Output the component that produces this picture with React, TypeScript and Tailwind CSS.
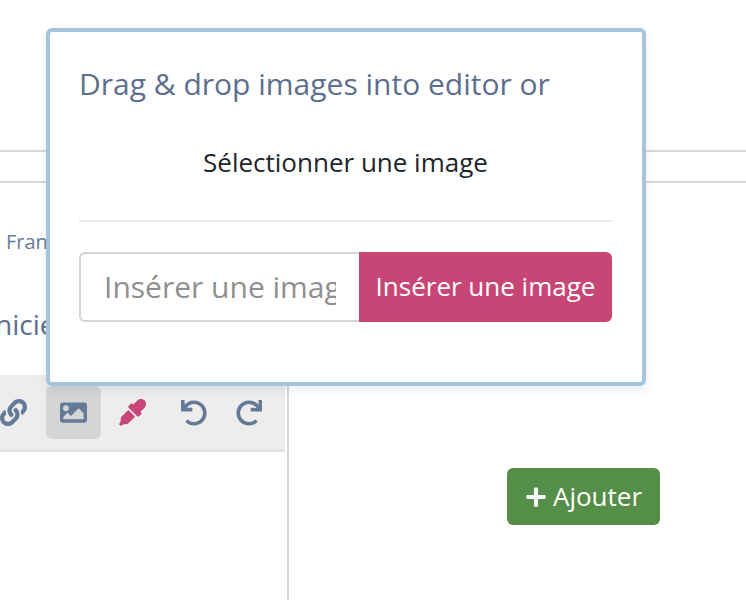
import React from "react";
import { FaEyeDropper, FaImage, FaLink, FaPlus, FaRedo, FaUndo } from "react-icons/fa";

const ToolButton: React.FC<{ active?: boolean; className?: string; children: React.ReactNode }> = ({
  active,
  className,
  children,
}) => (
  <div
    className={`flex h-[53px] w-[55px] shrink-0 items-center justify-center rounded-md ${active ? "bg-[#d4d5d7]" : ""} ${className ?? ""}`}
  >
    {children}
  </div>
);

const ImagePopover: React.FC = () => (
  <div className="absolute left-[46px] top-[28px] h-[358px] w-[600px] rounded-md border-4 border-[#a6c4db] bg-white pl-[29px] pr-[30px] pt-[32px] shadow-[0_4px_12px_rgba(0,0,0,0.08)]">
    <h3 className="text-[30px] leading-[40px] text-[#5d6f8e]">Drag &amp; drop images into editor or</h3>
    <div className="mt-[40px] text-center text-[26px] leading-[36px] text-[#212529]">Sélectionner une image</div>
    <hr className="mt-[40px] border-t-2 border-[#e8e8e8]" />
    <div className="mt-[30px] flex h-[70px]">
      <input
        readOnly
        placeholder="Insérer une image"
        className="w-[280px] rounded-l-md border-2 border-r-0 border-[#d4d4d4] bg-white px-[23px] pb-[2px] text-[30px] text-[#333] outline-none placeholder:text-[#8f8f8f]"
      />
      <button className="flex-1 rounded-r-md bg-[#c84675] pb-[2px] text-center text-[26px] text-white">Insérer une image</button>
    </div>
  </div>
);

export default function App() {
  return (
    <div className="relative h-[600px] w-[746px] overflow-hidden bg-white font-['Open_Sans',sans-serif]">
      <div className="h-[152px] border-b-2 border-[#d8d8d8]" />
      <div className="h-[31px] border-b-2 border-[#d8d8d8]" />
      <div className="flex h-[417px]">
        <div className="w-[289px] shrink-0 overflow-hidden border-r-2 border-[#d8d8d8] pr-[2px]">
          <div className="h-[47px]" />
          <div className="pl-[6px] text-[20px] leading-[24px] text-[#6b7c99]">Français</div>
          <div className="mt-[51px] -ml-[5px] whitespace-nowrap text-[28px] leading-[38px] text-[#5d6f8e]">nicien</div>
          <div className="mt-[32px] flex h-[77px] items-start justify-end border-b-[3px] border-[#e2e2e2] bg-[#ededed] pt-[11px] pr-[9px]">
            <ToolButton className="mr-[5px]">
              <FaLink className="h-[27px] w-[27px] text-[#647a97]" />
            </ToolButton>
            <ToolButton active className="mr-[4px]">
              <FaImage className="h-[27px] w-[27px] text-[#647a97]" />
            </ToolButton>
            <ToolButton className="mr-[6px]">
              <FaEyeDropper className="h-[27px] w-[27px] text-[#c84675]" />
            </ToolButton>
            <ToolButton>
              <FaUndo className="h-[26px] w-[26px] text-[#647a97]" />
            </ToolButton>
            <ToolButton>
              <FaRedo className="h-[26px] w-[26px] text-[#647a97]" />
            </ToolButton>
          </div>
        </div>
        <div className="flex flex-1 items-start pl-[218px] pt-[285px]">
          <button className="flex h-[57px] w-[153px] items-center justify-center gap-[6px] rounded-md bg-[#558e49] text-[26px] text-white">
            <FaPlus className="h-[22px] w-[22px]" />
            Ajouter
          </button>
        </div>
      </div>
      <ImagePopover />
    </div>
  );
}
